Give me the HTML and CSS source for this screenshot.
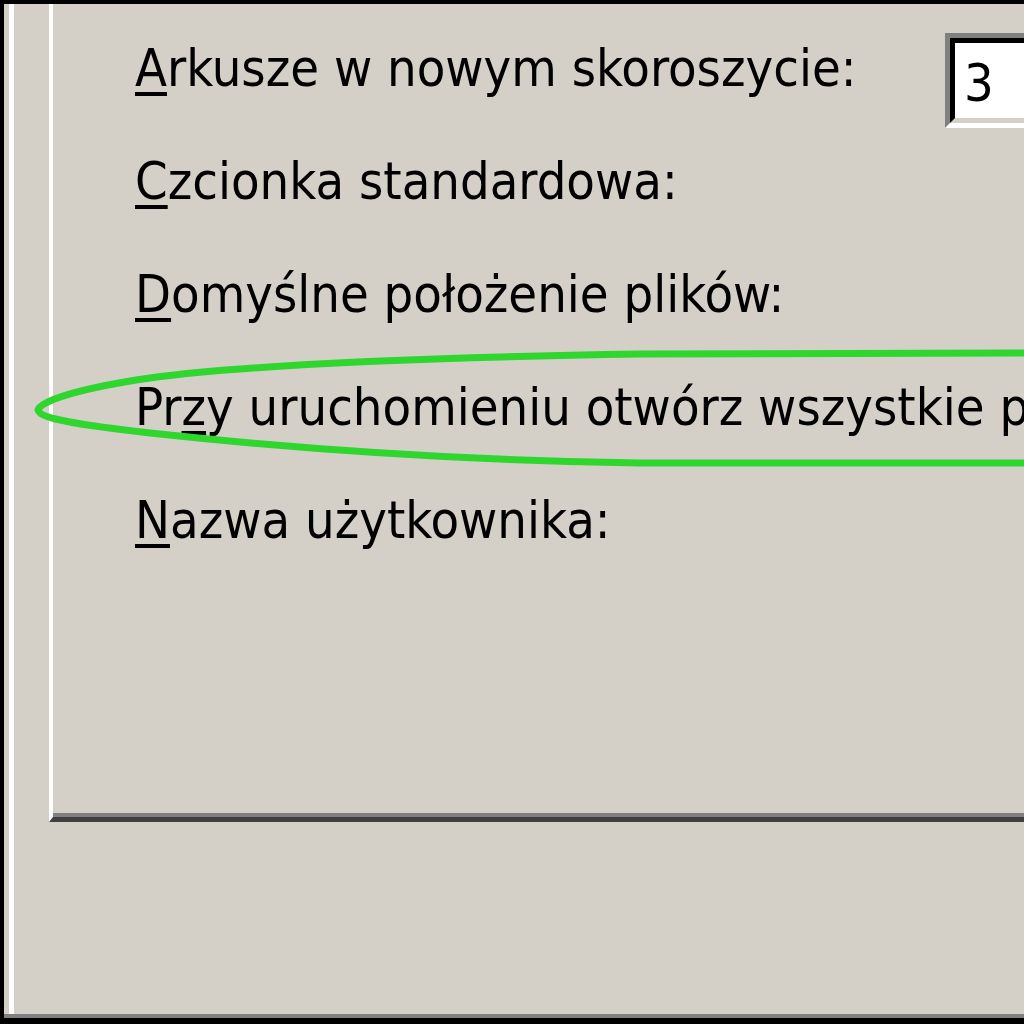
FILE: index.html
```html
<!DOCTYPE html>
<html lang="pl">
<head>
    <meta charset="UTF-8">
    <meta name="viewport" content="width=device-width, initial-scale=1.0">
    <title>Opcje - Ogólne</title>
    <link rel="stylesheet" href="styles.css">
</head>
<body>
    <div class="window">
        <div class="frame">
            <div class="tab-page">
                <div class="tab-body">
                    <div class="row">
                        <span class="label"><u>A</u>rkusze w nowym skoroszycie:</span>
                        <div class="spin">
                            <div class="spin-field">3</div>
                        </div>
                    </div>
                    <div class="row">
                        <span class="label"><u>C</u>zcionka standardowa:</span>
                    </div>
                    <div class="row">
                        <span class="label"><u>D</u>omyślne położenie plików:</span>
                    </div>
                    <div class="row">
                        <span class="label">Pr<u>z</u>y uruchomieniu otwórz wszystkie pliki w:</span>
                    </div>
                    <div class="row">
                        <span class="label"><u>N</u>azwa użytkownika:</span>
                    </div>
                </div>
            </div>
        </div>

        <!-- zielone zaznaczenie wokół opcji -->
        <svg class="highlight" width="1024" height="1024" viewBox="0 0 1024 1024">
            <path d="M1030 353 L640 354 C460 357 260 363 150 378 C80 388 40 401 38 410 C40 419 80 425 150 433 C270 446 430 460 640 463 L1030 463"
                  fill="none" stroke="#2ed62e" stroke-width="7" stroke-linejoin="round"/>
        </svg>
    </div>
</body>
</html>
```

FILE: styles.css
```css
html, body { margin: 0; height: 100%; overflow: hidden; }
body { background: #000; font-family: "DejaVu Sans Condensed", "Liberation Sans", sans-serif; color: #000; }

.window { margin: 4px 0 0 4px; width: 1020px; height: 1014px; box-sizing: border-box; background: #d4d0c8; border-bottom: 4px solid #808080; padding-left: 5px; }
.frame { height: 100%; border-left: 5px solid #fff; padding-left: 35px; }
.tab-page { height: 818px; box-sizing: border-box; border-left: 4px solid #fff; border-bottom: 5px solid #404040; }
.tab-body { height: 100%; box-sizing: border-box; border-bottom: 4px solid #808080; padding: 7px 0 0 82px; }

.row { height: 113px; display: flex; align-items: center; }
.label { font-size: 52px; line-height: 1; white-space: nowrap; }
.label u { text-decoration-thickness: 4px; text-underline-offset: 6px; }
.row:first-child .label { width: 810px; flex-shrink: 0; }

.spin { align-self: flex-start; margin-top: 22px; height: 95px; width: 120px; box-sizing: border-box; border: 5px solid; border-color: #808080 #fff #fff #808080; flex-shrink: 0; }
.spin-field { height: 100%; box-sizing: border-box; border: 5px solid; border-color: #000 #d4d0c8 #d4d0c8 #000; background: #fff; padding-left: 9px; font-size: 52px; line-height: 80px; }

.highlight { position: absolute; top: 0; left: 0; pointer-events: none; }
```
